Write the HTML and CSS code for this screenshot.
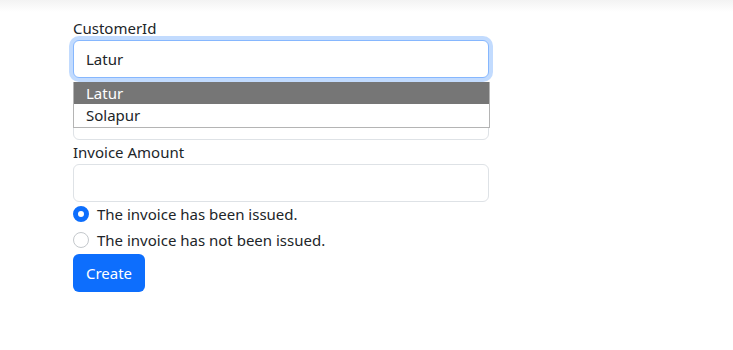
FILE: index.html
```html
<!DOCTYPE html>
<html lang="en">
<head>
    <meta charset="UTF-8">
    <meta name="viewport" content="width=device-width, initial-scale=1.0">
    <title>Create Invoice</title>
    <link rel="stylesheet" href="styles.css">
</head>
<body>
    <div class="top-shade"></div>
    <div class="page">
        <form class="invoice-form">
            <div class="field">
                <label for="customerId">CustomerId</label>
                <div class="combo">
                    <input type="text" id="customerId" class="form-control focused" value="Latur">
                    <ul class="suggestions">
                        <li class="active">Latur</li>
                        <li>Solapur</li>
                    </ul>
                </div>
            </div>
            <div class="field">
                <!-- label hidden behind the open suggestion list -->
                <label for="invoiceDate" aria-label="Invoice Date"></label>
                <input type="text" id="invoiceDate" class="form-control">
            </div>
            <div class="field">
                <label for="invoiceAmount">Invoice Amount</label>
                <input type="text" id="invoiceAmount" class="form-control">
            </div>
            <div class="form-check">
                <span class="radio checked"></span>
                <span class="check-label">The invoice has been issued.</span>
            </div>
            <div class="form-check">
                <span class="radio"></span>
                <span class="check-label">The invoice has not been issued.</span>
            </div>
            <button type="button" class="btn-primary">Create</button>
        </form>
    </div>
</body>
</html>
```
FILE: styles.css
```css
body {
    font-family: "Noto Sans", "Open Sans", sans-serif;
    font-size: 15px;
    color: #212529;
    background-color: #fff;
    margin: 0;
    padding: 0;
}

.top-shade {
    height: 12px;
    background: linear-gradient(#f3f3f3, #fff);
}

.page {
    padding: 4px 0 0 73px;
}

.invoice-form {
    width: 416px;
}

.field label {
    display: block;
    height: 24px;
    line-height: 24px;
}

.combo {
    position: relative;
}

.form-control {
    display: block;
    box-sizing: border-box;
    width: 100%;
    height: 38px;
    padding: 6px 12px;
    font-family: inherit;
    font-size: 15px;
    color: #212529;
    border: 1px solid #dee2e6;
    border-radius: 6px;
    outline: none;
}

.form-control.focused {
    border-color: #86b7fe;
    box-shadow: 0 0 0 4px rgba(13, 110, 253, 0.25);
}

.suggestions {
    position: absolute;
    top: 42px;
    left: 0;
    width: 415px;
    margin: 0;
    padding: 0 0 1px 0;
    list-style: none;
    background-color: #fff;
    border: 1px solid #b4b4b4;
    border-top: none;
    z-index: 2;
}

.suggestions li {
    height: 22px;
    line-height: 22px;
    padding-left: 12px;
}

.suggestions li.active {
    background-color: #767676;
    color: #fff;
}

.form-check {
    display: flex;
    align-items: center;
    height: 24px;
    margin-bottom: 2px;
}

.radio {
    box-sizing: border-box;
    width: 16px;
    height: 16px;
    border: 1px solid #c4c8cc;
    border-radius: 50%;
    margin-right: 8px;
    background-color: #fff;
}

.radio.checked {
    border: 5px solid #0d6efd;
}

.btn-primary {
    height: 38px;
    width: 72px;
    font-family: inherit;
    font-size: 15px;
    color: #fff;
    background-color: #0d6efd;
    border: none;
    border-radius: 6px;
    cursor: pointer;
}
```
